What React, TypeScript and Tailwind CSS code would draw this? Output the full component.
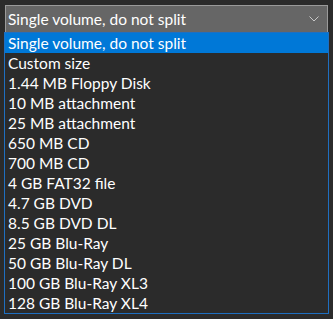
import React from 'react';

const options = [
    'Single volume, do not split',
    'Custom size',
    '1.44 MB Floppy Disk',
    '10 MB attachment',
    '25 MB attachment',
    '650 MB CD',
    '700 MB CD',
    '4 GB FAT32 file',
    '4.7 GB DVD',
    '8.5 GB DVD DL',
    '25 GB Blu-Ray',
    '50 GB Blu-Ray DL',
    '100 GB Blu-Ray XL3',
    '128 GB Blu-Ray XL4',
];

const App: React.FC = () => {
    const selected = 0;

    return (
        <div
            className="w-[333px] h-[319px] bg-[#2b2b2b] pt-[5px] text-white overflow-hidden"
            style={{ fontFamily: '"Segoe UI", Lato, sans-serif' }}
        >
            <div className="mx-[5px] h-[28px] border border-[#9a9a9a] bg-[#666666] flex items-center justify-between pl-[2px] pr-[8px]">
                <span className="text-[15.5px] leading-none pt-[2px]">{options[selected]}</span>
                <svg width="10" height="6" viewBox="0 0 10 6" className="text-[#c8c8c8]">
                    <path d="M0.5 0.5 L5 5 L9.5 0.5" fill="none" stroke="currentColor" strokeWidth="1" />
                </svg>
            </div>
            <div className="ml-[4px] w-[325px] border border-[#1f6fc0] bg-[#2b2b2b] -mt-px">
                {options.map((opt, i) => (
                    <div
                        key={opt}
                        className={`h-[20px] flex items-center pl-[3px] pt-[2px] text-[15.5px] leading-none ${i === selected ? 'bg-[#0078d7]' : ''}`}
                    >
                        {opt}
                    </div>
                ))}
            </div>
        </div>
    );
};

export default App;
